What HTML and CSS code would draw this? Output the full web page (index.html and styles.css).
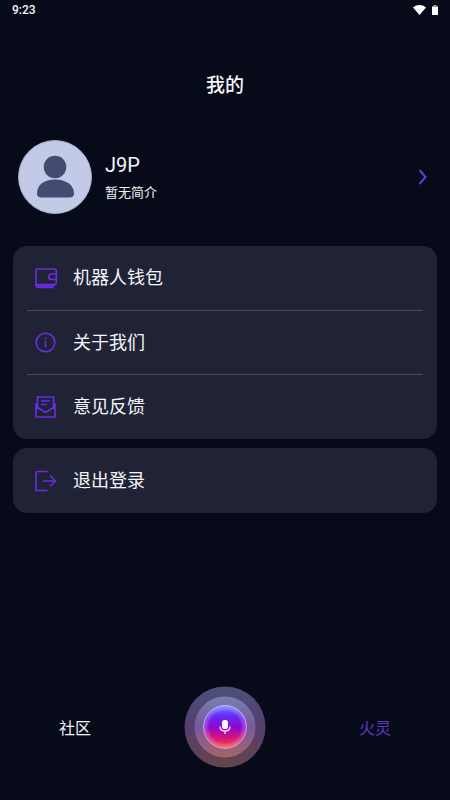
FILE: index.html
```html
<!DOCTYPE html>
<html lang="zh-CN">
<head>
<meta charset="utf-8">
<meta name="viewport" content="width=device-width, initial-scale=1">
<title>我的</title>
<link rel="stylesheet" href="styles.css">
</head>
<body>
<div class="status">
  <span>9:23</span>
  <div class="status-icons">
    <svg width="13" height="10" viewBox="0 0 13 10" aria-hidden="true"><path d="M0 2.500C4-.8 9-.8 13 2.500L6.500 10z" fill="#fff"/></svg>
    <svg width="6" height="10" viewBox="0 0 6 10" aria-hidden="true"><path d="M0 1.500h6V10H0z" fill="#fff"/><path d="M1.500 0h3v1.500h-3z" fill="#aaa"/></svg>
  </div>
</div>
<header class="header"><h1>我的</h1></header>
<main class="main">
  <a class="profile" href="#profile">
    <svg class="avatar" viewBox="0 0 74 74" aria-hidden="true">
      <circle cx="37" cy="37" r="36.500" fill="#c3cae8" stroke="#a2adc4"/>
      <circle cx="37" cy="27" r="11.300" fill="#444b70"/>
      <path d="M19 53.500C19 45 26 39.500 37 39.500S56 45 56 53.500q0 4-4.500 4h-28Q19 57.500 19 53.500z" fill="#444b70"/>
    </svg>
    <span class="who">
      <span class="name">J9P</span>
      <span class="bio">暂无简介</span>
    </span>
    <svg class="chevron" viewBox="0 0 10 16" aria-hidden="true"><path d="M1.500 1l6 7-6 7"/></svg>
  </a>
  <nav class="card" aria-label="菜单">
    <a class="row" href="#wallet">
      <svg class="icon" viewBox="0 0 24 24" aria-hidden="true"><path d="M22.300 8.500V5q0-2-2-2H4Q2 3 2 5v14h17.500q2.800 0 2.800-3V8H17.500q-2.800 0-2.800 2.700t2.800 2.700h4.800"/><path d="M2 18.500h18.500l-2 3H4q-2 0-2-2z" fill="#5a28c8"/></svg>
      <span>机器人钱包</span>
    </a>
    <a class="row" href="#about">
      <svg class="icon" viewBox="0 0 24 24" aria-hidden="true"><circle cx="11.500" cy="11.500" r="9.300"/><path d="M11.500 10V16.500M11.500 6.500v1.800"/></svg>
      <span>关于我们</span>
    </a>
    <a class="row" href="#feedback">
      <svg class="icon" viewBox="0 0 24 24" aria-hidden="true"><path d="M3.500 12V2h16v10M3.500 9H2v13h19V9h-1.500M2 11.500l9.500 6 9.500-6M7 6h9M7 9.500h6"/></svg>
      <span>意见反馈</span>
    </a>
  </nav>
  <div class="card">
    <button class="row" type="button">
      <svg class="icon" viewBox="0 0 24 24" aria-hidden="true"><path d="M13.500 2.500H4q-2 0-2 2v17h11.500M9 12h12.500M16 6.500l5.500 5.500-5.500 5.500"/></svg>
      <span>退出登录</span>
    </button>
  </div>
</main>
<footer class="tabs">
  <a class="tab" href="#community">社区</a>
  <button class="voice" type="button" aria-label="语音">
    <svg viewBox="0 0 82 82" aria-hidden="true">
      <defs>
        <linearGradient id="outer" x2="0" y2="1"><stop offset="0" stop-color="#4b5178"/><stop offset=".5" stop-color="#543e70"/><stop offset="1" stop-color="#654449"/></linearGradient>
        <linearGradient id="middle" x2="0" y2="1"><stop offset="0" stop-color="#787fad"/><stop offset=".5" stop-color="#78599b"/><stop offset="1" stop-color="#a3666b"/></linearGradient>
        <linearGradient id="core" x2="0" y2="1"><stop offset="0" stop-color="#697aff"/><stop offset=".25" stop-color="#662af0"/><stop offset=".5" stop-color="#8b08d0"/><stop offset=".75" stop-color="#d51478"/><stop offset="1" stop-color="#f24a42"/></linearGradient>
        <linearGradient id="rim" x2="0" y2="1"><stop offset="0" stop-color="#a9baff"/><stop offset=".5" stop-color="#b58aea"/><stop offset="1" stop-color="#f08b91"/></linearGradient>
        <radialGradient id="glow"><stop offset=".72" stop-color="#fff" stop-opacity="0"/><stop offset="1" stop-color="#dcc4ff" stop-opacity=".4"/></radialGradient>
      </defs>
      <circle cx="41" cy="41" r="40.500" fill="url(#outer)"/>
      <circle cx="41" cy="41" r="30.500" fill="url(#middle)"/>
      <circle cx="41" cy="41" r="21.500" fill="url(#core)" stroke="url(#rim)"/>
      <circle cx="41" cy="41" r="21.500" fill="url(#glow)"/>
      <rect x="38" y="34" width="6" height="9" rx="2.500" fill="#fff"/>
      <path d="M36 40.500q0 4.500 5 4.500t5-4.500M41 45v3" fill="none" stroke="#eccfff" stroke-width="1.500"/>
    </svg>
  </button>
  <a class="tab active" href="#huoling">火灵</a>
</footer>
</body>
</html>
```
FILE: styles.css
```css
* { box-sizing: border-box; }
body {
  margin: 0;
  min-height: 100vh;
  display: flex;
  flex-direction: column;
  background: #070b19;
  color: #f4f5fa;
  font-family: Roboto, "Noto Sans CJK SC", sans-serif;
}
a { color: inherit; text-decoration: none; }
.status {
  display: flex;
  justify-content: space-between;
  align-items: center;
  height: 20px;
  padding: 0 12px;
  font-size: 12px;
  font-weight: 500;
}
.status-icons { display: flex; gap: 6px; }
.header { padding: 52px 0 40px; text-align: center; }
h1 { margin: 0; font-size: 19px; line-height: 28px; font-weight: 500; }
.main { flex: 1; padding: 0 13px; }
.profile {
  display: flex;
  align-items: center;
  gap: 13px;
  padding: 0 9px 0 5px;
  margin-bottom: 32px;
}
.avatar { width: 74px; height: 74px; }
.who { flex: 1; display: flex; flex-direction: column; gap: 6px; padding-top: 2px; }
.name { font-size: 20px; line-height: 24px; }
.bio { font-size: 13px; line-height: 20px; }
.chevron { width: 10px; height: 16px; fill: none; stroke: #6739d8; stroke-width: 2; }
.card {
  padding: 0 14px;
  margin-bottom: 9px;
  border-radius: 14px;
  background: #1f2335;
}
.row {
  display: flex;
  align-items: center;
  gap: 15px;
  width: 100%;
  height: 64px;
  padding: 0 7px;
  border: 0;
  background: none;
  color: inherit;
  font: inherit;
  font-size: 18px;
  line-height: 28px;
  text-align: left;
}
.row + .row { border-top: 1px solid #484c5c; }
.row:last-child { height: 65px; }
.icon { width: 24px; height: 24px; fill: none; stroke: #6a2ce6; stroke-width: 1.6; }
.tabs {
  display: grid;
  grid-template-columns: 1fr 82px 1fr;
  align-items: center;
  padding: 0 0 32px;
}
.tab { padding: 3px 34px 0 0; font-size: 16px; line-height: 24px; text-align: center; }
.tab.active { padding: 3px 0 0 34px; color: #5b36c4; }
.voice { padding: 0; border: 0; border-radius: 50%; background: none; }
.voice svg { display: block; width: 82px; height: 82px; }
```
